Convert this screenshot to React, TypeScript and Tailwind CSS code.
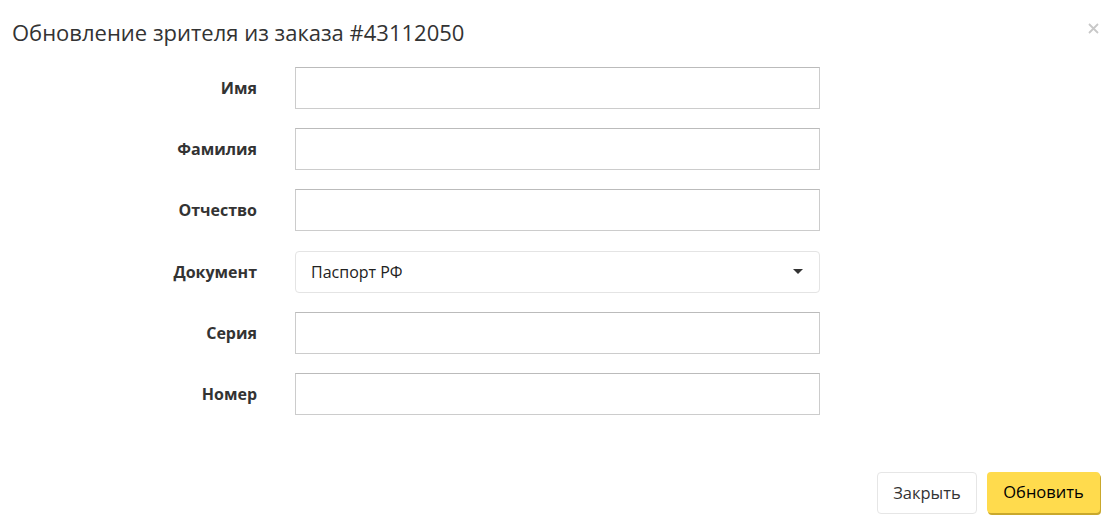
const fields = ['Имя', 'Фамилия', 'Отчество', 'Документ', 'Серия', 'Номер'];

export default function App() {
  return (
    <div
      className="relative w-[1118px] h-[529px] bg-white text-[#333]"
      style={{ fontFamily: '"Open Sans", "Noto Sans", sans-serif' }}
    >
      <button className="absolute left-[1088px] top-[23px] w-[11px] h-[11px]">
        <svg viewBox="0 0 11 11" width="11" height="11">
          <path d="M1 1L10 10M10 1L1 10" stroke="#c8c8c8" strokeWidth="1.8" />
        </svg>
      </button>

      <h2 className="pl-[12px] pt-[18px] text-[22px] leading-[28px] font-normal text-[#333]">
        Обновление зрителя из заказа #43112050
      </h2>

      <div className="mt-[21px] flex flex-col gap-[19.2px]">
        {fields.map((label) => (
          <div key={label} className="flex items-center h-[42px]">
            <label className="w-[257px] text-right text-[16px] font-bold text-[#333]">
              {label}
            </label>
            {label === 'Документ' ? (
              <div className="ml-[38px] w-[525px] h-[42px] flex items-center justify-between px-[15px] border border-[#e4e4e4] rounded-[4px] text-[16px] text-[#222]">
                <span>Паспорт РФ</span>
                <span className="w-0 h-0 border-l-[5px] border-r-[5px] border-t-[5px] border-l-transparent border-r-transparent border-t-[#333] mr-[1px]" />
              </div>
            ) : (
              <input
                className="ml-[38px] w-[525px] h-[42px] border border-[#ccc] border-t-[#bbb] px-[15px] text-[16px] outline-none"
                type="text"
              />
            )}
          </div>
        ))}
      </div>

      <div className="absolute right-[18px] top-[472px] flex items-start gap-[10px]">
        <button className="h-[42px] w-[100px] rounded-[4px] border border-[#e6e6e6] bg-white text-[16.5px] text-[#333]">
          Закрыть
        </button>
        <button className="h-[41px] w-[113px] rounded-[4px] bg-[#ffdb4d] text-[16.5px] text-black shadow-[1px_2px_0_#c9a82c]">
          Обновить
        </button>
      </div>
    </div>
  );
}
